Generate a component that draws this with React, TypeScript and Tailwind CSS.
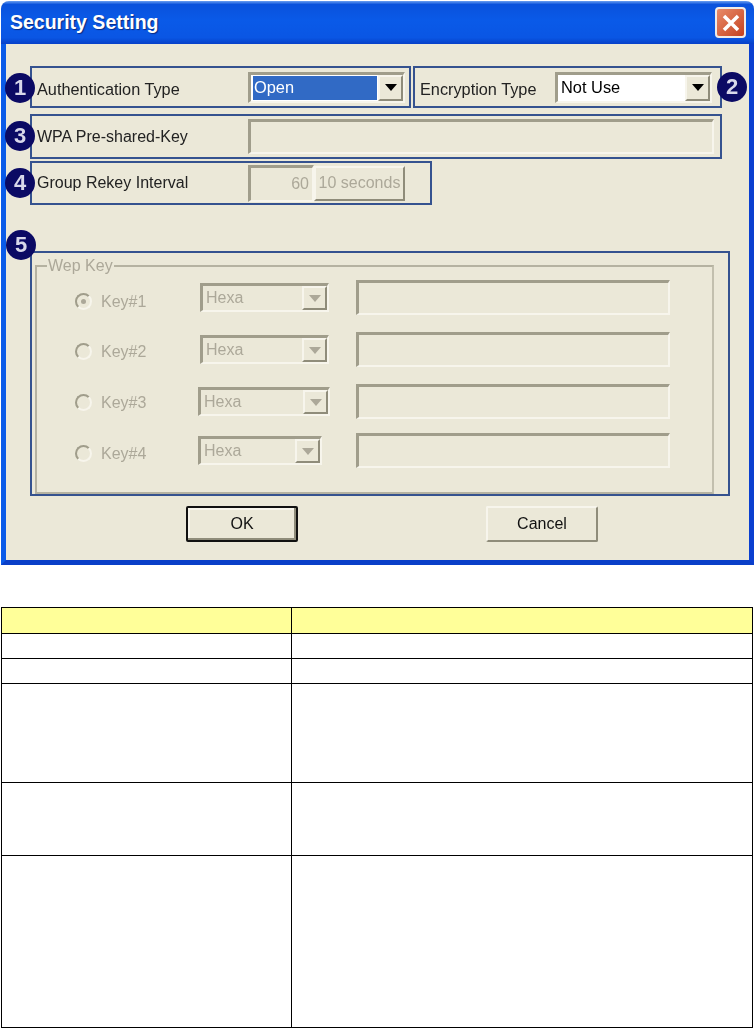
import React from 'react';

// 凹陷边框（XP 控件）
const sunken = 'border-t-[3px] border-l-[3px] border-r-2 border-b-2 border-t-[#a09d8b] border-l-[#a09d8b] border-r-[#f7f5ec] border-b-[#f7f5ec]';
const raised = 'border-2 border-t-[#f7f5ec] border-l-[#f7f5ec] border-r-[#8f8c7a] border-b-[#8f8c7a]';
const annotation = 'relative border-2 border-[#35528f]';
const disabledText = 'text-[#aca899]';
const labelText = 'shrink-0 text-[16.3px] text-[#222]';
const labelTextSmall = 'shrink-0 text-[16px] text-[#222]';

// 圆形编号
const Badge: React.FC<{ n: number; className: string }> = ({ n, className }) => (
  <div className={`absolute z-10 w-[30px] h-[30px] rounded-full bg-[#0b0a64] text-[#d8d8ea] flex items-center justify-center text-[22px] font-bold leading-none ${className}`}>
    {n}
  </div>
);

const Arrow: React.FC<{ color: string }> = ({ color }) => (
  <svg width="12" height="7" viewBox="0 0 12 7"><path d="M0 0H12L6 7Z" fill={color} /></svg>
);

const ComboBox: React.FC<{ value: string; selected?: boolean; className: string }> = ({ value, selected, className }) => (
  <div className={`${sunken} bg-white flex items-stretch h-[31px] ${className}`}>
    <div className="flex-1 min-w-0 p-[1px] pl-[2px] flex">
      <div className={`flex-1 px-[1px] flex items-center text-[16.4px] leading-none ${selected ? 'bg-[#316ac5] text-white' : 'text-black'}`}>{value}</div>
    </div>
    <div className={`${raised} w-[25px] bg-[#ebe8d8] flex items-center justify-center`}>
      <Arrow color="#000" />
    </div>
  </div>
);

const HexaSelect: React.FC<{ className: string }> = ({ className }) => (
  <div className={`${sunken} flex items-stretch h-[29px] ${className}`}>
    <div className={`flex-1 pl-[3px] flex items-center text-[16px] leading-none ${disabledText}`}>Hexa</div>
    <div className={`${raised} w-[25px] flex items-center justify-center`}>
      <Arrow color="#aca899" />
    </div>
  </div>
);

interface KeyRowProps {
  label: string;
  checked?: boolean;
  selectClass: string;
  rowClass: string;
  radioClass: string;
}

const KeyRow: React.FC<KeyRowProps> = ({ label, checked, selectClass, rowClass, radioClass }) => (
  <div className={`flex items-center ${rowClass}`}>
    <div className={`flex items-center w-[125px] shrink-0 ${radioClass}`}>
      <div className="w-[17px] h-[17px] rounded-full border-2 border-t-[#a09d8b] border-l-[#a09d8b] border-r-[#f7f5ec] border-b-[#f7f5ec] flex items-center justify-center shrink-0">
        {checked && <div className="w-[5px] h-[5px] rounded-full bg-[#aca899]" />}
      </div>
      <span className={`ml-[9px] text-[16px] ${disabledText}`}>{label}</span>
    </div>
    <div className="w-[156px] shrink-0">
      <HexaSelect className={selectClass} />
    </div>
    <div className={`${sunken} w-[314px] h-[35px]`} />
  </div>
);

// 表格行高度与参考图一致
const rows = ['h-[26px] bg-[#ffff99]', 'h-[25px]', 'h-[25px]', 'h-[99px]', 'h-[73px]', 'h-[172px]'];

export default function App() {
  return (
    <div className="w-[755px] h-[1028px] bg-white overflow-hidden font-['Liberation_Sans',Arial,sans-serif]">
      <div className="pt-px pl-px pr-px">
        <div className="h-[564px] rounded-t-[8px] overflow-hidden bg-[#ebe8d8] flex flex-col blur-[0.4px]">
          {/* 标题栏 */}
          <div className="h-[43px] shrink-0 flex items-center justify-between pl-[9px] pr-[8px] bg-[linear-gradient(to_bottom,#6a9ff0_0%,#0a52dc_8%,#0a5ae8_45%,#0a56e4_85%,#0640c8_100%)]">
            <span className="text-white font-bold text-[19.5px] [text-shadow:1px_1px_1px_#0a2a80]">Security Setting</span>
            <div className="w-[31px] h-[31px] rounded-[4px] border-2 border-[#f0ece8] bg-gradient-to-br from-[#e88a68] to-[#c4401c] flex items-center justify-center">
              <svg width="18" height="18" viewBox="0 0 18 18"><path d="M2 2L16 16M16 2L2 16" stroke="#fff" strokeWidth="3.5" /></svg>
            </div>
          </div>
          {/* 内容区 */}
          <div className="flex-1 border-l-[5px] border-r-[5px] border-b-[5px] border-l-[#0a5be8] border-r-[#0a3fd0] border-b-[#0a3fc8] pl-[24px] pt-[22px]">
            <div className="flex gap-[2px] h-[42px]">
              <div className={`${annotation} w-[381px] flex items-center pl-[5px]`}>
                <Badge n={1} className="-left-[27px] top-[5px]" />
                <span className={`${labelText} w-[211px] pt-[5px]`}>Authentication Type</span>
                <ComboBox value="Open" selected className="w-[157px]" />
              </div>
              <div className={`${annotation} w-[309px] flex items-center pl-[5px]`}>
                <Badge n={2} className="-right-[27px] top-[4px]" />
                <span className={`${labelText} w-[135px] pt-[5px]`}>Encryption Type</span>
                <ComboBox value="Not Use" className="w-[157px]" />
              </div>
            </div>
            <div className={`${annotation} w-[692px] h-[45px] mt-[6px] flex items-center pl-[5px]`}>
              <Badge n={3} className="-left-[27px] top-[5px]" />
              <span className={`${labelTextSmall} w-[211px]`}>WPA Pre-shared-Key</span>
              <div className={`${sunken} w-[466px] h-[35px]`} />
            </div>
            <div className={`${annotation} w-[402px] h-[44px] mt-[2px] flex items-center pl-[5px]`}>
              <Badge n={4} className="-left-[27px] top-[5px]" />
              <span className={`${labelTextSmall} w-[211px]`}>Group Rekey Interval</span>
              <div className={`${sunken} w-[66px] h-[37px] flex items-center justify-end pr-[3px] text-[16px] ${disabledText}`}>60</div>
              <div className={`${raised} w-[91px] h-[35px] flex items-center justify-center text-[16px] whitespace-nowrap ${disabledText}`}>10 seconds</div>
            </div>
            <div className={`${annotation} w-[700px] h-[245px] mt-[46px] pl-[3px] pt-[5px] pr-[14px]`}>
              <Badge n={5} className="-left-[26px] -top-[23px]" />
              <fieldset className="h-[236px] border-2 border-t-[#b5b2a1] border-l-[#b5b2a1] border-r-[#c2bfae] border-b-[#b5b2a1]">
                <legend className={`ml-[10px] px-[1px] text-[16px] leading-[16px] ${disabledText}`}>Wep Key</legend>
                <div className="pl-[38px]">
                  <KeyRow label="Key#1" checked selectClass="w-[129px]" rowClass="mt-[6px]" radioClass="pt-[8px]" />
                  <KeyRow label="Key#2" selectClass="w-[129px]" rowClass="mt-[17px]" radioClass="pt-[4px]" />
                  <KeyRow label="Key#3" selectClass="w-[132px] -ml-[2px]" rowClass="mt-[17px]" radioClass="pt-[2px]" />
                  <KeyRow label="Key#4" selectClass="w-[124px] -ml-[2px]" rowClass="mt-[14px]" radioClass="pt-[6px]" />
                </div>
              </fieldset>
            </div>
            <div className="flex mt-[10px] pl-[156px] gap-[188px]">
              <button className="w-[112px] h-[36px] rounded-[2px] border-2 border-[#111] shadow-[inset_-2px_-2px_0_#8f8c7a,inset_2px_2px_0_#f7f5ec] text-[16px] text-[#111]">OK</button>
              <button className={`${raised} w-[112px] h-[36px] rounded-[2px] text-[16px] text-[#111]`}>Cancel</button>
            </div>
          </div>
        </div>
      </div>
      {/* 说明表格（文字为空） */}
      <div className="mt-[42px] ml-px w-[752px] border-t border-l border-black">
        {rows.map((row, i) => (
          <div key={i} className={`flex border-r border-b border-black ${row}`}>
            <div className="w-[290px] border-r border-black" />
            <div className="flex-1" />
          </div>
        ))}
      </div>
    </div>
  );
}
